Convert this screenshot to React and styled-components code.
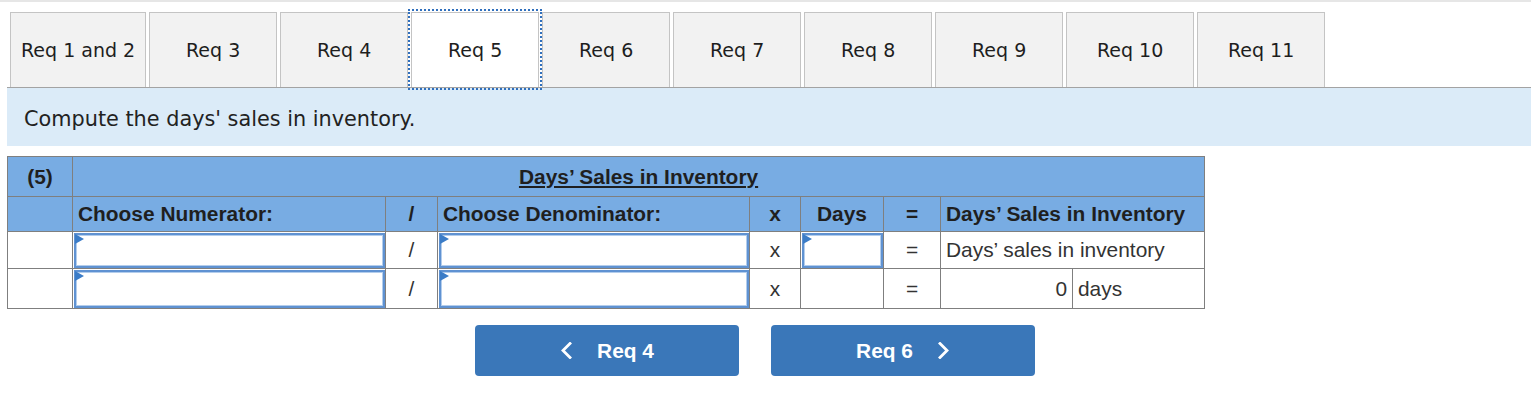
import React from 'react'
import styled, { createGlobalStyle } from 'styled-components'

const GlobalStyle = createGlobalStyle`
  body {
    margin: 0;
    background: #fff;
  }
`

const Page = styled.div`
  border-top: 2px solid #e6e6e6;
  padding-left: 7px;
`

const TabBar = styled.div`
  display: flex;
  gap: 3px;
  padding: 10px 0 0 3px;
  border-bottom: 1px solid #a3a3a3;
`

const Tab = styled.div`
  box-sizing: border-box;
  height: 75px;
  min-width: 128px;
  padding: 0 10px;
  display: flex;
  align-items: center;
  justify-content: center;
  font-family: "DejaVu Sans", Verdana, sans-serif;
  font-size: 19px;
  color: #1e1e1e;
  background: ${p => (p.$active ? '#fff' : '#f2f2f2')};
  border: 1px solid #c4c4c4;
  border-bottom: none;
  outline: ${p => (p.$active ? '2px dotted #2f6fbd' : 'none')};
  outline-offset: 1px;
  position: relative;
  z-index: ${p => (p.$active ? 1 : 0)};
`

const Instruction = styled.div`
  height: 58px;
  display: flex;
  align-items: center;
  padding-left: 17px;
  padding-top: 3px;
  box-sizing: border-box;
  background: #dbebf8;
  font-family: "DejaVu Sans", Verdana, sans-serif;
  font-size: 20.8px;
  color: #222;
`

const Table = styled.table`
  margin-top: 10px;
  width: 1197px;
  border-collapse: collapse;
  table-layout: fixed;
  font-family: "Liberation Sans", Arial, sans-serif;
  font-size: 20.9px;
  color: #333;
`

const Row = styled.tr`
  height: ${p => p.$h}px;
  background: ${p => (p.$head ? '#78ace3' : '#fff')};
  color: ${p => (p.$head ? '#1f1f1f' : '#333')};
  font-weight: ${p => (p.$head ? 'bold' : 'normal')};
`

const Cell = styled.td`
  border: 1px solid #7f7f7f;
  padding: ${p => (p.$input ? '0' : '0 5px')};
  text-align: ${p => p.$align || 'center'};
  vertical-align: middle;
  white-space: nowrap;
  overflow: hidden;
`

const Title = styled.span`
  text-decoration: underline;
  text-underline-offset: 2px;
`

const InputBox = styled.div`
  position: relative;
  box-sizing: border-box;
  height: ${p => p.$h}px;
  margin: 0 0 0 1px;
  background: #fff;
  border: 2px solid #5f92d2;
  box-shadow: inset 0 0 0 1px #b3cdec;

  &::before {
    content: '';
    position: absolute;
    left: -1px;
    top: -1px;
    border-top: 5px solid transparent;
    border-bottom: 5px solid transparent;
    border-left: 9px solid #3b7cc7;
  }
`

const NavRow = styled.div`
  display: flex;
  gap: 32px;
  padding: 16px 0 0 468px;
`

const NavButton = styled.button`
  width: 264px;
  height: 51px;
  display: flex;
  align-items: center;
  justify-content: center;
  gap: 25px;
  border: none;
  border-radius: 4px;
  background: #3a77b9;
  color: #fff;
  font-family: "Liberation Sans", Arial, sans-serif;
  font-weight: bold;
  font-size: 20.9px;
  cursor: pointer;
`

const Chevron = ({ dir }) => (
  <svg width="12" height="17" viewBox="0 0 12 17" fill="none">
    <polyline
      points={dir === 'left' ? '10,1.5 3,8.5 10,15.5' : '2,1.5 9,8.5 2,15.5'}
      stroke="#fff"
      strokeWidth="2.8"
      strokeLinecap="square"
    />
  </svg>
)

const tabs = ['Req 1 and 2', 'Req 3', 'Req 4', 'Req 5', 'Req 6', 'Req 7', 'Req 8', 'Req 9', 'Req 10', 'Req 11']
const widths = [65, 313, 52, 312, 51, 83, 57, 132, 132]

export default function App() {
  return (
    <Page>
      <GlobalStyle />
      <TabBar>
        {tabs.map(t => (
          <Tab key={t} $active={t === 'Req 5'}>{t}</Tab>
        ))}
      </TabBar>
      <Instruction>Compute the days' sales in inventory.</Instruction>
      <Table>
        <colgroup>
          {widths.map((w, i) => <col key={i} style={{ width: w }} />)}
        </colgroup>
        <tbody>
          <Row $head $h={40}>
            <Cell>(5)</Cell>
            <Cell colSpan={8}><Title>Days’ Sales in Inventory</Title></Cell>
          </Row>
          <Row $head $h={35}>
            <Cell />
            <Cell $align="left">Choose Numerator:</Cell>
            <Cell>/</Cell>
            <Cell $align="left">Choose Denominator:</Cell>
            <Cell>x</Cell>
            <Cell>Days</Cell>
            <Cell>=</Cell>
            <Cell $align="left" colSpan={2}>Days’ Sales in Inventory</Cell>
          </Row>
          <Row $h={37}>
            <Cell />
            <Cell $input><InputBox $h={35} /></Cell>
            <Cell>/</Cell>
            <Cell $input><InputBox $h={35} /></Cell>
            <Cell>x</Cell>
            <Cell $input><InputBox $h={35} /></Cell>
            <Cell>=</Cell>
            <Cell $align="left" colSpan={2}>Days’ sales in inventory</Cell>
          </Row>
          <Row $h={40}>
            <Cell />
            <Cell $input><InputBox $h={38} /></Cell>
            <Cell>/</Cell>
            <Cell $input><InputBox $h={38} /></Cell>
            <Cell>x</Cell>
            <Cell />
            <Cell>=</Cell>
            <Cell $align="right">0</Cell>
            <Cell $align="left">days</Cell>
          </Row>
        </tbody>
      </Table>
      <NavRow>
        <NavButton>
          <Chevron dir="left" />
          <span>Req 4</span>
        </NavButton>
        <NavButton>
          <span>Req 6</span>
          <Chevron dir="right" />
        </NavButton>
      </NavRow>
    </Page>
  )
}
